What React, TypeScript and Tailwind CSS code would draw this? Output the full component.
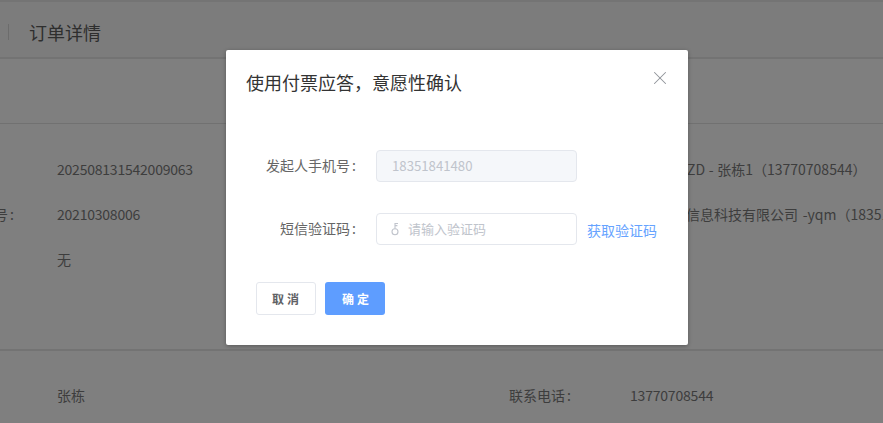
import { X } from 'lucide-react';

const font = { fontFamily: '"Noto Sans CJK SC", "Noto Sans", sans-serif' };

function KeyIcon() {
  return (
    <svg viewBox="0 0 12 14" className="h-[14px] w-[12px] shrink-0" fill="none" stroke="currentColor" strokeWidth="1.1">
      <circle cx="5" cy="9.8" r="3" />
      <path d="M5 6.8V1M5 1.5h3M5 3.6h2.4" />
    </svg>
  );
}

export default function App() {
  return (
    <div
      className="relative h-[423px] w-[883px] overflow-hidden bg-[#7f7f7f] text-[14px] text-[#3d3d3d]"
      style={font}
    >
      {/* Page behind the mask */}
      <div className="h-[2px] bg-[#747474]" />
      <div className="flex h-[57px] items-center border-b-2 border-[#737373] bg-[#7c7c7c] pt-[4px]">
        <div className="ml-[8px] h-[16px] w-px bg-[#6c6c6c]" />
        <h1 className="ml-[20px] text-[18px] leading-none text-[#2e2e2e]">订单详情</h1>
      </div>

      <div className="h-[65px] border-b border-[#717171]" />

      <div className="h-[227px] whitespace-nowrap border-b-2 border-[#737373] pt-[23px]">
        <div className="flex h-[45px] items-center">
          <span className="ml-[57px] w-[573px] shrink-0 tracking-[-0.22px]">202508131542009063</span>
          <span className="[word-spacing:0.5px]">南京物流<span className="ml-[1px]">ZD - 张栋1（13770708544）</span></span>
        </div>
        <div className="flex h-[45px] items-center">
          <span className="w-[57px] shrink-0 overflow-hidden">
            <span className="-ml-[6px]">号<span className="ml-[2px]">:</span></span>
          </span>
          <span className="w-[573px] shrink-0 tracking-[-0.22px]">20210308006</span>
          <span className="[word-spacing:1.5px]">南京某某信息科技有限公司 -yqm（18351841480）</span>
        </div>
        <div className="flex h-[45px] items-center">
          <span className="ml-[57px]">无</span>
        </div>
      </div>

      <div className="flex h-[45px] items-center whitespace-nowrap mt-[22px]">
        <span className="ml-[57px] w-[452px] shrink-0">张栋</span>
        <span className="w-[121px] shrink-0">联系电话<span className="ml-[2px]">:</span></span>
        <span className="tracking-[-0.2px]">13770708544</span>
      </div>

      {/* Dialog */}
      <div className="absolute left-[226px] top-[50px] h-[295px] w-[462px] rounded-[2px] bg-white text-[#666] shadow-[0_1px_4px_rgba(0,0,0,0.3)]">
        <div className="flex items-start justify-between pl-[20px] pr-[17px] pt-[19px]">
          <h2 className="text-[18px] leading-[26px] text-[#333]">使用付票应答，意愿性确认</h2>
          <X className="mt-[-2px] h-[22px] w-[22px] text-[#909399]" strokeWidth={1.1} />
        </div>

        <div className="mt-[55px] flex h-[32px] items-center">
          <span className="-mt-[2px] w-[130px] text-right">发起人手机号<span className="ml-[2px]">:</span></span>
          <div className="ml-[20px] flex h-[32px] w-[201px] items-center rounded-[4px] border border-[#e4e7ed] bg-[#f5f7fa] pl-[15px] text-[13.2px] text-[#c0c4cc]">
            18351841480
          </div>
        </div>

        <div className="mt-[31px] flex h-[32px] items-center">
          <span className="-mt-[2px] w-[130px] text-right">短信验证码<span className="ml-[2px]">:</span></span>
          <div className="ml-[20px] flex h-[32px] w-[201px] items-center rounded-[4px] border border-[#e4e7ed] bg-white pl-[13px] text-[13px] text-[#c0c4cc]">
            <KeyIcon />
            <span className="ml-[6px]">请输入验证码</span>
          </div>
          <span className="ml-[10px] mt-[2px] text-[#66a3ff]">获取验证码</span>
        </div>

        <div className="ml-[30px] mt-[37px] flex gap-[9px] text-[12px] font-bold">
          <button className="h-[33px] w-[60px] rounded-[3px] border border-[#e4e7ed] bg-white pl-[2px] tracking-[3px] text-[#606266]">
            取消
          </button>
          <button className="h-[33px] w-[60px] rounded-[3px] bg-[#5e9dff] pl-[4px] tracking-[3px] text-white">确定</button>
        </div>
      </div>
    </div>
  );
}
